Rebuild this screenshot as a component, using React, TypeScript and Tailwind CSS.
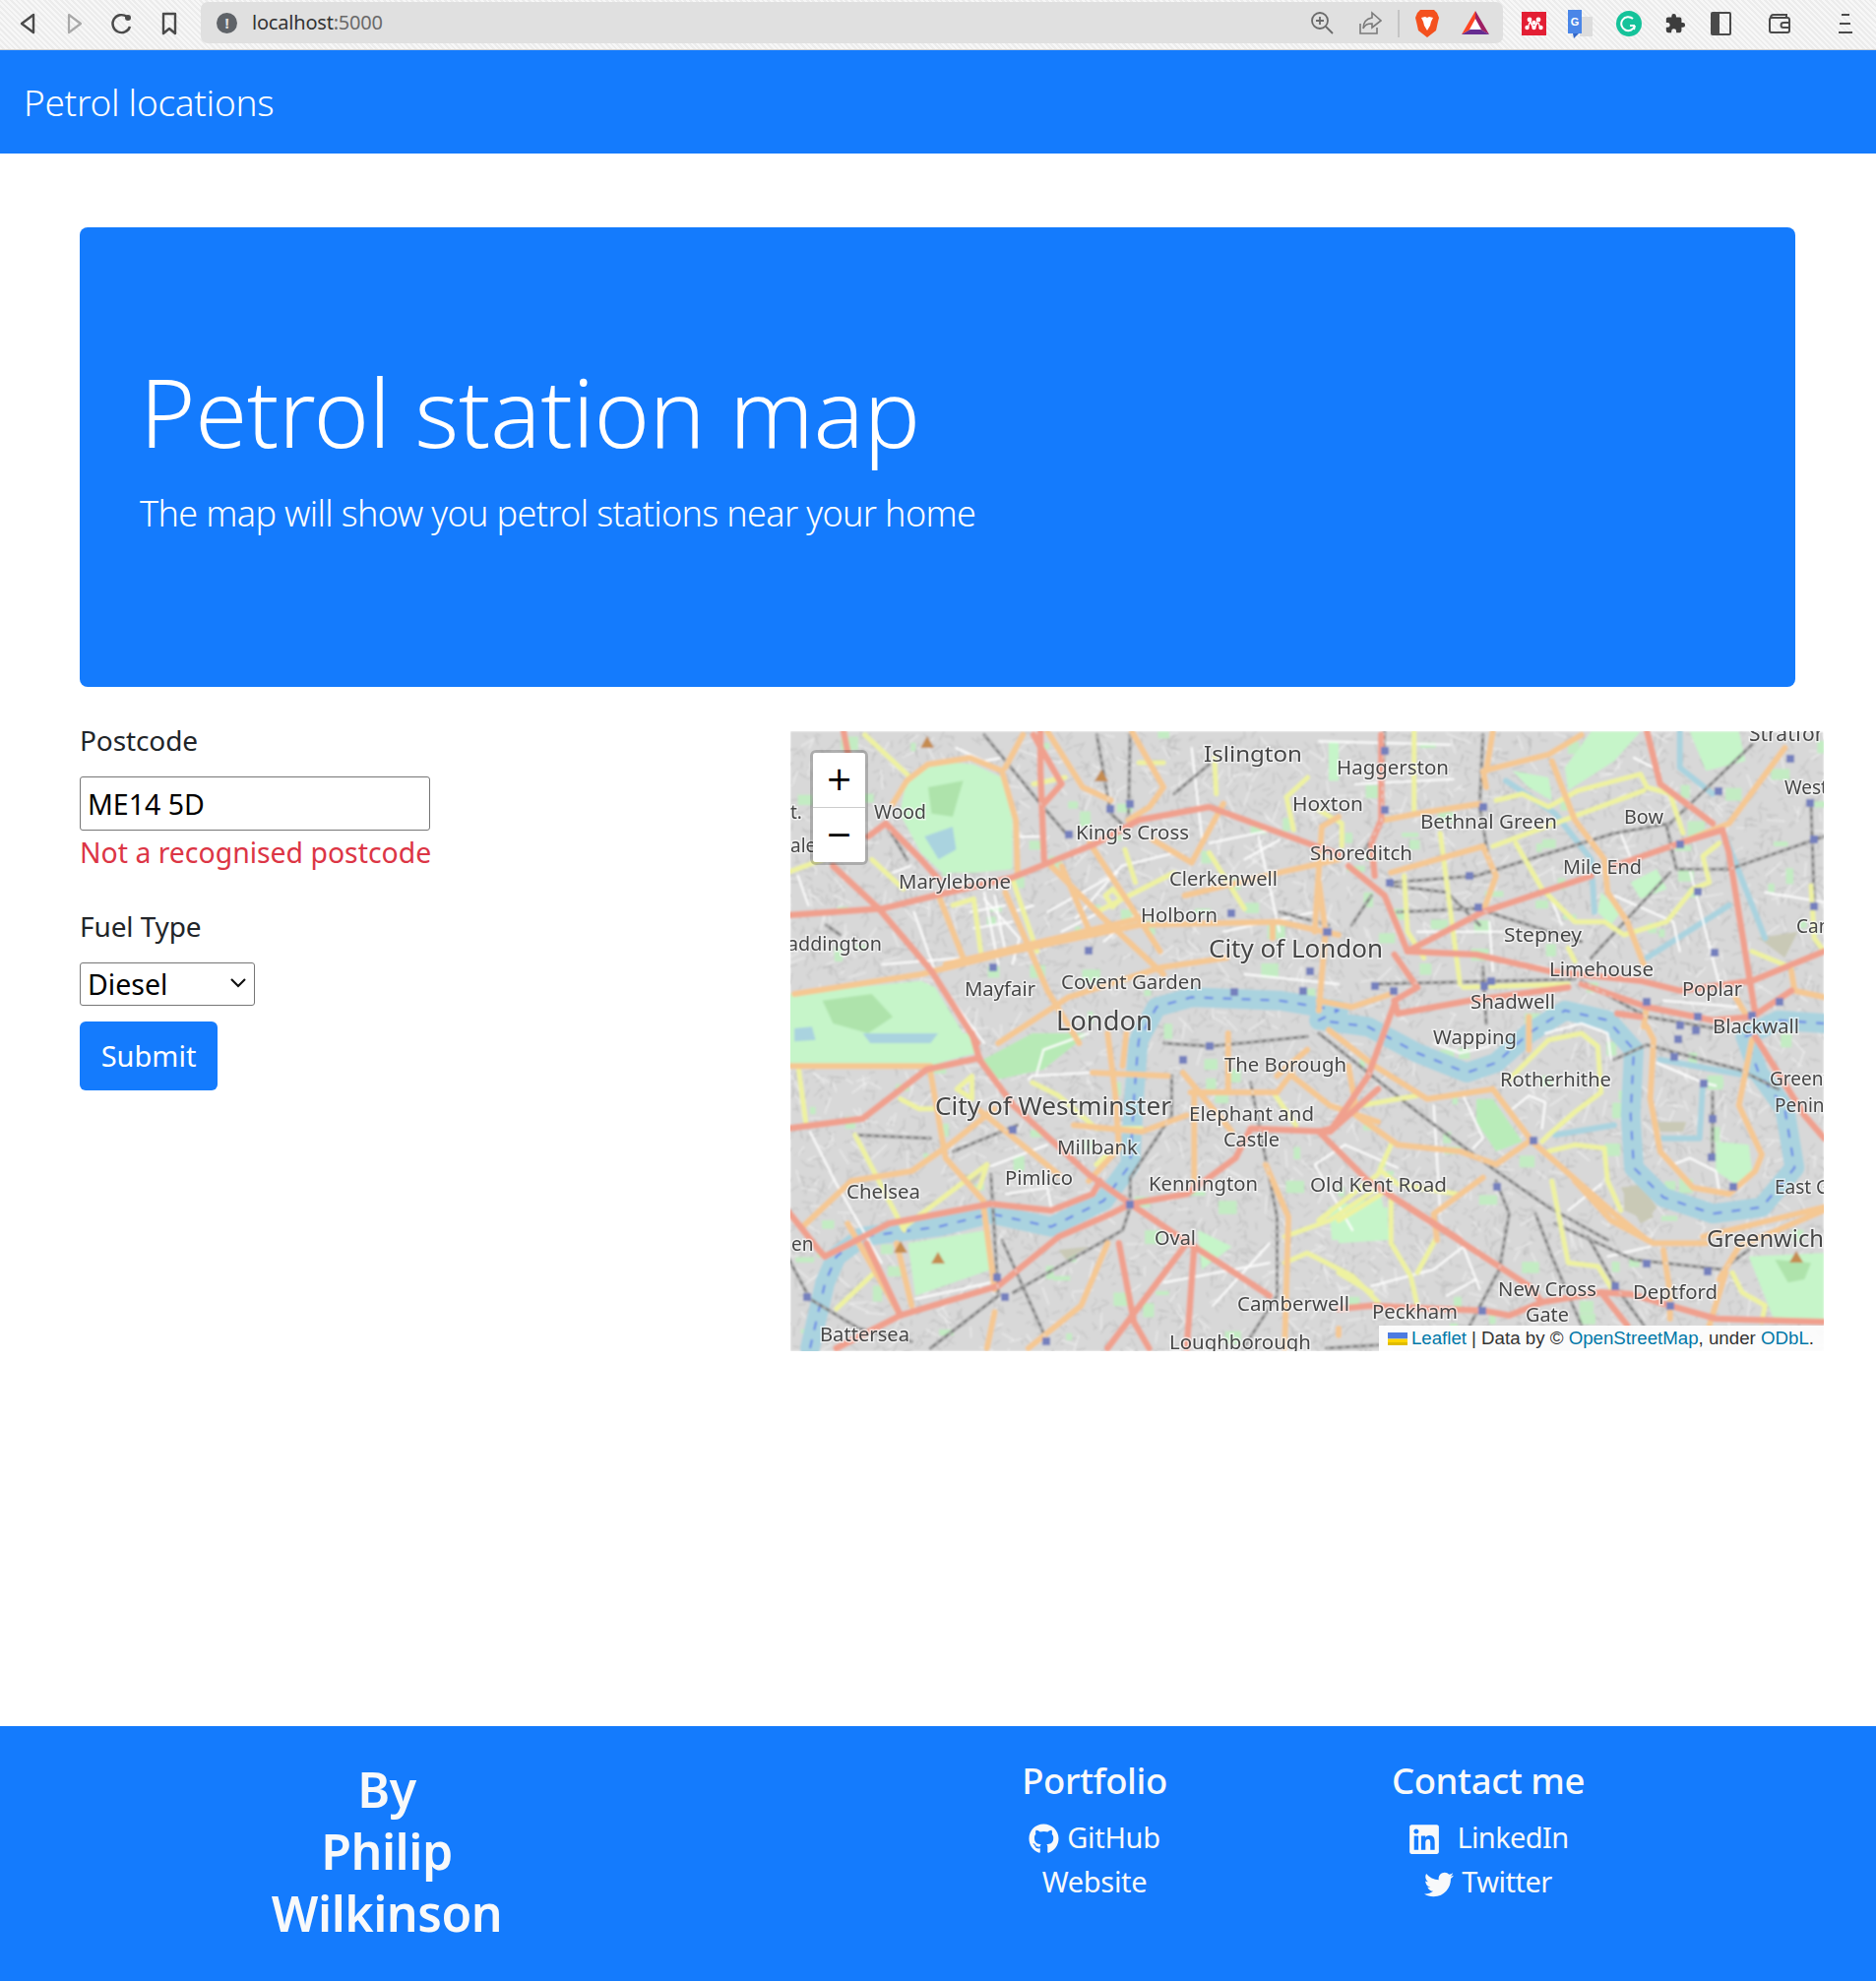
import { FaGithub, FaLinkedin, FaTwitter } from "react-icons/fa";

type Zone = 4 | 7 | 8 | 9 | 5;

// zoom crops of the map had their own scales, points are kept in those
function toMap(z: Zone, x: number, y: number): [number, number] {
  if (z === 4) return [x / 2.8 - 3, y / 3 - 3];
  if (z === 7) return [x / 2.613 - 3, y / 3 + 307];
  if (z === 8) return [x / 3 + 537, y / 3 - 3];
  if (z === 9) return [x / 3 + 537, y / 3 + 257];
  return [x / 3 + 557, y / 3 + 457];
}

function conv(z: Zone, nums: number[]) {
  const out: string[] = [];
  for (let i = 0; i < nums.length; i += 2) {
    const [x, y] = toMap(z, nums[i], nums[i + 1]);
    out.push(`${x.toFixed(1)},${y.toFixed(1)}`);
  }
  return out.join(" ");
}

const RIVER = [
  conv(7, [60, 960, 100, 760, 130, 680, 200, 620, 400, 590, 540, 550, 700, 590, 840, 510, 910, 400, 920, 200, 930, 50]),
  conv(4, [1000, 950, 1050, 850, 1150, 820, 1400, 830, 1568, 860]),
  conv(9, [0, 110, 150, 130, 300, 210, 450, 270, 540, 240, 640, 150, 750, 80, 880, 110, 960, 200, 950, 400, 960, 560, 1050, 650, 1200, 700, 1350, 680, 1450, 560, 1420, 380, 1340, 270, 1300, 160, 1400, 110, 1540, 120]),
].join(" ");

const ROADS: Record<string, [Zone, number[]][]> = {
  white: [
    [4, [300, 440, 350, 420]], [4, [360, 560, 420, 740]], [4, [560, 500, 600, 720]], [4, [650, 330, 720, 330]],
    [4, [820, 580, 950, 420, 1100, 380]], [4, [1200, 350, 1380, 310]], [4, [1150, 60, 1180, 340]],
    [4, [480, 60, 560, 100, 610, 90]], [4, [30, 450, 60, 540]], [4, [270, 720, 500, 700]], [4, [450, 800, 560, 960]],
    [4, [1300, 750, 1568, 780]], [4, [560, 520, 660, 640, 640, 720]], [4, [1240, 620, 1500, 560]],
    [4, [520, 560, 620, 540]], [4, [530, 610, 640, 590]], [4, [590, 510, 620, 680]], [4, [640, 560, 700, 540]],
    [4, [740, 560, 840, 500, 940, 440]], [4, [780, 620, 1000, 500]], [4, [900, 650, 1000, 560]],
    [4, [1300, 400, 1400, 340]], [4, [1260, 480, 1500, 420]], [4, [1340, 330, 1400, 620]],
    [7, [60, 300, 130, 460, 250, 700]], [7, [640, 140, 650, 130, 800, 120]], [7, [540, 405, 690, 340]],
    [7, [580, 490, 690, 470, 700, 530]], [7, [1000, 760, 1280, 700]], [7, [1130, 830, 1280, 640]],
    [7, [1480, 340, 1400, 400, 1500, 600]], [7, [340, 810, 540, 760]], [7, [660, 130, 680, 50, 800, 0]],
    [8, [0, 40, 400, 50]], [8, [110, 170, 410, 155]], [8, [900, 510, 1080, 590, 1100, 680]],
    [8, [700, 500, 740, 600]], [8, [520, 590, 530, 740]], [8, [920, 320, 960, 420]], [8, [1130, 430, 1220, 780]],
    [8, [300, 620, 560, 620]], [8, [960, 90, 1040, 130]], [8, [1360, 500, 1540, 530]], [8, [1050, 830, 1280, 850]],
    [9, [690, 150, 800, 120, 880, 150, 890, 230]], [9, [350, 180, 430, 210, 520, 190]], [9, [1030, 240, 1170, 300, 1210, 310]],
    [9, [590, 380, 640, 340, 690, 360, 680, 440]], [9, [1080, 550, 1130, 530, 1210, 570, 1220, 630]],
    [9, [350, 370, 370, 700]], [9, [80, 490, 240, 560]], [9, [440, 340, 500, 470, 470, 500]], [9, [760, 690, 860, 610]],
    [5, [100, 320, 290, 270, 380, 200, 430, 330]], [5, [330, 350, 420, 300]], [5, [820, 230, 950, 200]],
  ],
  yellow: [
    [4, [220, 20, 350, 150]], [4, [240, 400, 330, 490]], [4, [470, 540, 530, 520, 550, 680]], [4, [640, 460, 710, 680]],
    [4, [880, 560, 1100, 440]], [4, [960, 370, 990, 470]], [4, [1200, 380, 1300, 550]], [4, [1215, 90, 1220, 200]],
    [4, [700, 170, 790, 150]], [4, [0, 440, 100, 400]], [4, [1420, 210, 1480, 150]], [4, [1420, 210, 1440, 310]],
    [4, [1000, 105, 1070, 105]], [4, [905, 510, 925, 490, 950, 520, 925, 545, 905, 510]],
    [7, [30, 110, 50, 280]], [7, [180, 310, 310, 600]], [7, [300, 200, 350, 230, 390, 230]],
    [7, [650, 150, 720, 190, 820, 290, 940, 290]], [7, [310, 590, 530, 400]], [7, [1320, 620, 1440, 570, 1568, 470]],
    [7, [1320, 700, 1380, 670, 1500, 740, 1568, 820]], [7, [130, 840, 240, 720]], [7, [1290, 180, 1350, 280]],
    [7, [530, 400, 510, 470]], [7, [820, 400, 850, 370]], [7, [450, 170, 490, 130, 490, 200, 450, 170]],
    [8, [290, 10, 290, 250]], [8, [370, 320, 430, 780]], [8, [260, 450, 270, 620, 320, 700]], [8, [0, 250, 70, 290, 70, 360]],
    [8, [540, 220, 620, 200, 700, 240, 790, 190, 980, 140, 1000, 180, 1070, 200, 1110, 320]],
    [8, [530, 360, 720, 290, 990, 190]], [8, [600, 350, 680, 490, 780, 590, 870, 590, 930, 630, 1060, 590, 1140, 490]],
    [8, [1140, 490, 1190, 470, 1170, 390, 1220, 350]], [8, [1320, 680, 1440, 730]], [8, [1500, 480, 1510, 640, 1540, 680]],
    [8, [440, 790, 760, 780]], [8, [760, 670, 780, 710]],
    [9, [580, 290, 700, 170, 800, 150, 850, 190, 860, 330, 780, 390, 700, 460, 680, 480]],
    [9, [870, 500, 880, 600, 920, 690]], [9, [700, 510, 780, 490, 870, 500]], [9, [130, 370, 300, 340]],
    [9, [220, 490, 180, 580, 0, 720]], [9, [190, 570, 240, 610, 420, 640]], [9, [0, 720, 30, 700]],
    [5, [0, 280, 100, 340]], [5, [160, 40, 160, 190, 220, 290, 240, 380]], [5, [300, 170, 240, 280]],
    [5, [650, 0, 700, 250, 790, 260, 840, 340]], [5, [1200, 280, 1230, 340, 1300, 380, 1290, 430]], [5, [0, 120, 130, 40]],
  ],
  orange: [
    [4, [300, 230, 340, 160, 400, 110, 520, 90, 610, 130, 650, 280, 655, 450]],
    [4, [20, 810, 380, 750, 640, 680, 1000, 600, 1400, 590, 1568, 630]], [4, [430, 510, 500, 700]],
    [4, [450, 720, 1000, 580]], [4, [620, 500, 740, 800, 830, 960]], [4, [750, 420, 900, 580, 1070, 750]],
    [4, [860, 350, 1060, 680]], [4, [780, 420, 860, 620]], [4, [600, 960, 800, 820, 1060, 730, 1250, 700]],
    [4, [1040, 340, 1150, 410, 1240, 230]], [4, [1130, 510, 1400, 440, 1568, 400]], [4, [670, 20, 620, 120]],
    [4, [980, 10, 1070, 180, 1030, 240, 970, 280]], [4, [1380, 640, 1380, 590]], [4, [1500, 620, 1520, 300, 1568, 270]],
    [4, [740, 10, 840, 180, 920, 220]],
    [7, [40, 590, 170, 450, 330, 420, 430, 340, 550, 230]], [7, [380, 120, 420, 380, 520, 510]], [7, [510, 235, 720, 430]],
    [7, [10, 100, 380, 100]], [7, [810, 120, 1010, 130]], [7, [850, 0, 870, 180, 880, 350, 800, 450]],
    [7, [1050, 120, 1180, 300]], [7, [1170, 0, 1170, 180]], [7, [1080, 180, 1080, 470]],
    [7, [1070, 180, 1300, 180, 1340, 120]], [7, [760, 280, 940, 300, 1060, 250]], [7, [1270, 400, 1330, 560, 1320, 960]],
    [7, [850, 640, 780, 830, 640, 960]], [7, [530, 960, 550, 850]], [7, [520, 520, 550, 780]], [7, [290, 640, 330, 830]],
    [7, [160, 580, 300, 860]], [7, [1340, 130, 1440, 220, 1568, 270]], [7, [900, 0, 890, 100]], [7, [1300, 130, 1380, 50]],
    [8, [220, 440, 500, 360, 540, 450, 500, 560]], [8, [510, 180, 500, 130, 700, 80, 800, 20]], [8, [510, 130, 530, 10]],
    [8, [710, 100, 780, 280, 870, 400, 880, 500, 940, 590, 990, 720]], [8, [1100, 350, 1250, 290, 1420, 60]],
    [8, [200, 280, 300, 260, 490, 230]], [8, [0, 830, 100, 850, 220, 810]], [8, [1270, 820, 1300, 870]],
    [8, [1440, 740, 1450, 800, 1540, 820]], [8, [0, 470, 20, 620, 0, 860]],
    [9, [30, 140, 170, 250, 330, 350, 530, 320]], [9, [530, 320, 650, 480, 900, 700, 1000, 780]],
    [9, [240, 490, 430, 510, 540, 550, 640, 480]], [9, [100, 390, 240, 490]], [9, [500, 590, 350, 700, 360, 780]],
    [9, [1000, 130, 1020, 170, 1010, 350, 1040, 510, 1140, 620, 1250, 640, 1330, 570, 1350, 520, 1280, 370, 1320, 170]],
    [9, [1000, 60, 990, 130]], [9, [90, 250, 110, 360, 100, 390]], [9, [1170, 770, 1540, 680]], [9, [640, 100, 640, 200]],
    [5, [0, 450, 0, 470]], [5, [720, 0, 830, 120, 960, 190, 1120, 190]], [5, [990, 210, 1010, 340, 1010, 420]],
    [5, [1160, 300, 1220, 200, 1478, 90]], [5, [1180, 280, 1130, 440]],
  ],
  red: [
    [4, [0, 570, 270, 550, 420, 510, 640, 455, 880, 350, 1000, 280, 1200, 240, 1480, 350, 1568, 385]],
    [4, [720, 10, 720, 130, 730, 400]], [4, [700, 20, 780, 170, 730, 230]], [4, [130, 420, 260, 550, 410, 740, 540, 960]],
    [4, [230, 330, 280, 290, 380, 400, 430, 460]], [4, [160, 10, 180, 120]],
    [7, [490, 0, 510, 80, 600, 220, 800, 430, 910, 520, 1040, 620, 1280, 800]], [7, [0, 290, 200, 260, 370, 110, 510, 75]],
    [7, [100, 680, 270, 580, 540, 520, 700, 540, 810, 490, 830, 450]], [7, [210, 640, 300, 860]],
    [7, [300, 860, 560, 770, 720, 620, 860, 550, 910, 520]], [7, [0, 540, 90, 670, 100, 680]], [7, [300, 860, 130, 960]],
    [7, [910, 520, 1060, 490, 1190, 380, 1230, 290, 1440, 300, 1568, 170]], [7, [880, 640, 920, 880, 960, 960]],
    [7, [1060, 640, 850, 960]], [7, [1080, 650, 1060, 960]],
    [8, [90, 420, 200, 510, 270, 680, 500, 560, 830, 450]], [8, [900, 420, 1100, 350, 1230, 310, 1250, 380, 1330, 870]],
    [8, [1000, 10, 1040, 170, 1200, 290]], [8, [270, 680, 480, 690, 700, 740, 980, 770, 1100, 800, 1320, 770, 1540, 680]],
    [8, [230, 830, 240, 870, 460, 830, 760, 790]], [8, [190, 20, 190, 280, 160, 350, 170, 450]], [8, [230, 690, 300, 790, 230, 830]],
    [9, [230, 60, 150, 280, 40, 440]], [9, [0, 450, 150, 600, 430, 780]], [9, [800, 0, 1000, 70, 1200, 110, 1320, 100, 1440, 20]],
    [9, [1330, 160, 1480, 400, 1540, 470]], [9, [910, 90, 980, 100]], [9, [40, 440, 0, 450]],
    [5, [150, 40, 580, 320, 620, 370]], [5, [0, 390, 100, 380, 300, 390, 440, 395, 520, 410, 620, 370, 800, 340, 890, 345, 1010, 380, 1150, 420, 1480, 430]],
    [5, [800, 340, 880, 440]],
  ],
  rail: [
    [4, [880, 20, 920, 260, 950, 290]], [4, [975, 20, 970, 280]], [4, [560, 20, 720, 230, 800, 330]], [4, [290, 310, 340, 400]],
    [4, [1100, 200, 1200, 110]], [4, [1400, 560, 1540, 600]], [4, [110, 600, 150, 630]],
    [7, [0, 680, 60, 810, 190, 900, 330, 940]], [7, [540, 430, 560, 800, 380, 960]], [7, [570, 630, 690, 940]],
    [7, [910, 530, 890, 600, 600, 790]], [7, [1020, 130, 1020, 250, 910, 440, 910, 530]], [7, [1000, 30, 1120, 40, 1380, 10]],
    [7, [1230, 150, 1300, 560, 1300, 800, 1210, 960]], [7, [440, 360, 610, 280]], [7, [180, 310, 380, 320]], [7, [1430, 960, 1568, 950]],
    [8, [1540, 330, 1250, 430, 1090, 430, 1060, 300, 1320, 50]], [8, [1070, 440, 830, 700]],
    [8, [1070, 290, 900, 320, 640, 400, 480, 450, 220, 470]], [8, [500, 20, 490, 240, 520, 410]], [8, [200, 10, 190, 290, 140, 370]],
    [8, [220, 480, 390, 500, 490, 600]], [8, [100, 600, 160, 510]], [8, [240, 560, 480, 550, 800, 650]], [8, [170, 780, 780, 765]],
    [8, [500, 730, 510, 900]], [8, [1500, 230, 1510, 540]], [8, [800, 770, 1000, 880, 1240, 920]],
    [9, [0, 150, 300, 390, 540, 570, 700, 680, 880, 780]], [9, [900, 230, 1000, 185, 1280, 260, 1400, 320]], [9, [1200, 330, 1200, 530]],
    [5, [480, 0, 520, 100, 490, 270, 400, 440]], [5, [600, 100, 650, 230, 740, 440]], [5, [660, 130, 900, 240, 1170, 270, 1250, 210]],
    [5, [760, 170, 850, 330, 930, 440]],
  ],
  canal: [
    [8, [570, 160, 720, 260, 830, 400, 840, 560]], [8, [1000, 700, 1250, 540]], [8, [1230, 310, 1360, 640]], [8, [1100, 10, 1100, 120, 1200, 200]],
    [9, [1170, 310, 1160, 470, 1050, 470]], [9, [1040, 230, 1310, 280]], [9, [720, 460, 900, 430]],
  ],
};

const ROAD_STYLE: Record<string, [string, number]> = {
  white: ["#ffffff", 2],
  yellow: ["#eef2a0", 5],
  orange: ["#f5c893", 6],
  red: ["#f0a08e", 6.5],
  rail: ["#7c7c7c", 3],
  canal: ["#aad3df", 6],
};

const PARKS: [Zone, string, number[]][] = [
  [4, "#c6f5c9", [340, 150, 420, 100, 530, 110, 610, 150, 640, 280, 640, 430, 530, 440, 440, 440, 380, 380, 320, 260]],
  [4, "#c6f5c9", [0, 810, 380, 770, 420, 790, 520, 965, 0, 965]],
  [7, "#c6f5c9", [0, 0, 490, 0, 500, 60, 370, 100, 0, 100]],
  [4, "#aee3ab", [100, 830, 240, 810, 300, 880, 230, 930, 130, 900]],
  [4, "#aee3ab", [400, 180, 500, 160, 470, 270, 410, 260]],
  [4, "#aad3df", [390, 330, 470, 300, 480, 370, 430, 400]],
  [4, "#aad3df", [20, 915, 70, 910, 80, 950, 20, 955]],
  [7, "#aad3df", [200, 0, 400, 0, 380, 30, 220, 30]],
  [7, "#b7eab6", [520, 80, 650, 0, 800, 0, 680, 110, 560, 140]],
  [7, "#c6f5c9", [320, 640, 530, 600, 540, 720, 340, 800]],
  [8, "#c6f5c9", [750, 120, 830, 10, 980, 10, 900, 100, 760, 190]],
  [8, "#c6f5c9", [590, 130, 700, 150, 710, 220, 640, 180]],
  [8, "#c6f5c9", [950, 470, 1030, 430, 1060, 490, 980, 520]],
  [8, "#c6f5c9", [860, 500, 920, 560, 890, 600, 850, 560]],
  [8, "#c6f5c9", [1130, 10, 1280, 10, 1300, 100, 1180, 130]],
  [9, "#b9ecb9", [480, 350, 530, 350, 620, 480, 540, 510, 480, 420]],
  [9, "#c6f5c9", [1210, 480, 1310, 490, 1320, 570, 1270, 610, 1210, 570]],
  [5, "#c6f5c9", [1250, 230, 1480, 220, 1480, 430, 1330, 430]],
  [5, "#aee3ab", [1330, 240, 1440, 250, 1420, 300, 1370, 310]],
  [5, "#c6f5c9", [0, 100, 150, 80, 150, 180, 0, 190]],
  [9, "#c6f5c9", [30, 680, 190, 650, 220, 780, 40, 780]],
  [7, "#c6f5c9", [1090, 600, 1180, 650, 1100, 720]],
  [4, "#c6f5c9", [1540, 40, 1568, 40, 1568, 160, 1540, 160]],
];

const TAN: [Zone, number[]][] = [
  [9, [930, 620, 980, 610, 1030, 680, 1000, 720, 930, 690]],
  [9, [1030, 420, 1120, 420, 1110, 450, 1040, 450]],
  [5, [860, 20, 910, 15, 960, 110, 920, 130]],
  [7, [720, 660, 800, 650, 740, 690]],
  [7, [460, 430, 520, 430, 480, 470]],
  [8, [1340, 640, 1460, 620, 1420, 700]],
];

const STATIONS: [number, number][] = [
  [604, 20], [604, 80], [704, 77], [609, 154], [690, 147], [699, 179], [545, 204], [594, 259], [613, 264], [705, 259],
  [712, 254], [870, 275], [922, 290], [904, 299], [920, 304], [977, 289], [1005, 275], [904, 115], [922, 163], [939, 225],
  [943, 61], [1016, 28], [1036, 73], [1040, 110], [1040, 178], [902, 313], [898, 331], [928, 358], [937, 394], [936, 433],
  [958, 463], [755, 416], [718, 463], [870, 541], [932, 549], [838, 564], [894, 584], [703, 589], [325, 79], [345, 74],
  [283, 105], [448, 185], [546, 204], [303, 223], [206, 240], [528, 244], [451, 265], [521, 264], [226, 405], [345, 481],
  [399, 334], [426, 320], [210, 555], [218, 575], [260, 620], [17, 575],
];

const PEAKS: [number, number][] = [[139, 11], [316, 45], [112, 524], [150, 535], [1022, 534]];

const LABELS: [string, number, number, number, number][] = [
  ["Islington", 420, 31, 22, 100],
  ["Haggerston", 555, 44, 19, 114],
  ["Hoxton", 510, 81, 19, 72],
  ["Bethnal Green", 640, 99, 19.5, 139],
  ["Bow", 847, 94, 19, 40],
  ["Mile End", 785, 145, 19, 80],
  ["Shoreditch", 528, 131, 19, 104],
  ["King's Cross", 290, 110, 19, 115],
  ["Wood", 85, 89, 19, 53],
  ["t.", 0, 89, 19, 0],
  ["ale", 0, 123, 19, 0],
  ["Marylebone", 110, 160, 19, 114],
  ["Clerkenwell", 385, 157, 19, 110],
  ["Holborn", 356, 194, 19, 78],
  ["City of London", 425, 230, 25, 177],
  ["addington", -3, 223, 19, 96],
  ["Mayfair", 177, 269, 19, 72],
  ["Covent Garden", 275, 262, 19, 143],
  ["London", 270, 304, 28, 98],
  ["Stepney", 725, 214, 19, 79],
  ["Limehouse", 771, 249, 19, 106],
  ["Poplar", 906, 269, 19, 61],
  ["Shadwell", 691, 282, 19, 86],
  ["Wapping", 653, 318, 19, 85],
  ["Blackwall", 937, 307, 20, 88],
  ["Rotherhithe", 721, 361, 19, 113],
  ["The Borough", 441, 346, 19, 124],
  ["City of Westminster", 147, 390, 26, 240],
  ["Elephant and", 405, 396, 19, 127],
  ["Castle", 440, 422, 19, 57],
  ["Millbank", 271, 430, 19, 82],
  ["Pimlico", 218, 461, 19, 69],
  ["Kennington", 364, 467, 19, 111],
  ["Chelsea", 57, 475, 19, 75],
  ["Old Kent Road", 528, 468, 19, 139],
  ["Oval", 370, 522, 19, 42],
  ["Camberwell", 454, 589, 19, 114],
  ["Peckham", 591, 597, 19, 87],
  ["New Cross", 719, 574, 19, 100],
  ["Gate", 747, 600, 19, 44],
  ["Deptford", 856, 577, 19, 86],
  ["Loughborough", 385, 628, 19, 144],
  ["Battersea", 30, 620, 19, 91],
  ["en", 1, 528, 19, 0],
  ["Greenwich", 931, 524, 24, 119],
  ["East Greenwich", 1000, 470, 19, 0],
  ["Greenwich", 995, 360, 19, 0],
  ["Peninsula", 1000, 387, 19, 0],
  ["Stratford", 974, 10, 21, 0],
  ["West Ham", 1010, 64, 19, 0],
  ["Canning Town", 1022, 205, 19, 0],
];

// street grain on the land, same every run
function grain() {
  let s = 4242;
  const rnd = () => {
    s = (s * 1664525 + 1013904223) % 4294967296;
    return s / 4294967296;
  };
  let gray = "";
  let light = "";
  const greens: [number, number, number, number][] = [];
  for (let i = 0; i < 6000; i++) {
    const x = rnd() * 1050;
    const y = rnd() * 630;
    const a = rnd() * Math.PI;
    const l = 4 + rnd() * 8;
    gray += `M${x.toFixed(0)} ${y.toFixed(0)}l${(Math.cos(a) * l).toFixed(1)} ${(Math.sin(a) * l).toFixed(1)}`;
  }
  for (let i = 0; i < 1300; i++) {
    const x = rnd() * 1050;
    const y = rnd() * 630;
    const a = rnd() * Math.PI;
    const l = 6 + rnd() * 16;
    light += `M${x.toFixed(0)} ${y.toFixed(0)}l${(Math.cos(a) * l).toFixed(1)} ${(Math.sin(a) * l).toFixed(1)}`;
  }
  for (let i = 0; i < 170; i++) {
    greens.push([rnd() * 1050, rnd() * 630, 5 + rnd() * 14, 4 + rnd() * 12]);
  }
  return { gray, light, greens };
}
const GRAIN = grain();

function MapDrawing() {
  return (
    <svg viewBox="0 0 1050 630" width="1050" height="630" className="block">
      <defs>
        <filter id="tile" x="0" y="0" width="100%" height="100%">
          <feGaussianBlur stdDeviation="0.8" />
        </filter>
        <filter id="tileText" x="-5%" y="-20%" width="110%" height="140%">
          <feGaussianBlur stdDeviation="0.4" />
        </filter>
      </defs>
      <g filter="url(#tile)">
        <rect width="1050" height="630" fill="#d8d8d8" />
        <path d={GRAIN.gray} stroke="#bdbdbd" strokeWidth="1" fill="none" />
        <path d={GRAIN.light} stroke="#eeeeee" strokeWidth="1.2" fill="none" />
        {GRAIN.greens.map((g, i) => (
          <rect key={i} x={g[0]} y={g[1]} width={g[2]} height={g[3]} fill="#c3ecc3" />
        ))}
        {PARKS.map(([z, c, pts], i) => (
          <polygon key={i} points={conv(z, pts)} fill={c} />
        ))}
        {TAN.map(([z, pts], i) => (
          <polygon key={i} points={conv(z, pts)} fill="#c9c9b6" />
        ))}
        <polyline points={RIVER} fill="none" stroke="#aad3df" strokeWidth="20" strokeLinejoin="round" strokeLinecap="round" />
        <polyline points={RIVER} fill="none" stroke="#6280e6" strokeWidth="2" strokeDasharray="9 10" strokeLinejoin="round" />
        {["canal", "white", "rail", "yellow", "orange", "red"].map((key) =>
          ROADS[key].map(([z, pts], i) => (
            <polyline
              key={key + i}
              points={conv(z, pts)}
              fill="none"
              stroke={ROAD_STYLE[key][0]}
              strokeWidth={ROAD_STYLE[key][1]}
              strokeLinejoin="round"
              strokeLinecap="round"
            />
          )),
        )}
        {ROADS.rail.map(([z, pts], i) => (
          <polyline key={i} points={conv(z, pts)} fill="none" stroke="#e4e4e4" strokeWidth="1" strokeDasharray="4 4" />
        ))}
        {STATIONS.map(([x, y], i) => (
          <rect key={i} x={x - 4} y={y - 4} width="8" height="8" fill="#7580bd" />
        ))}
        {PEAKS.map(([x, y], i) => (
          <polygon key={i} points={`${x - 7},${y + 6} ${x + 7},${y + 6} ${x},${y - 6}`} fill="#c58b4f" />
        ))}
      </g>
      <g filter="url(#tileText)">
        {LABELS.map(([t, x, y, size, w], i) => (
          <text
            key={i}
            x={x}
            y={y}
            fontSize={size}
            fontFamily="'Noto Sans', sans-serif"
            fill="#474747"
            stroke="#ffffff"
            strokeOpacity="0.6"
            strokeWidth="3"
            paintOrder="stroke"
            {...(w ? { textLength: w, lengthAdjust: "spacingAndGlyphs" as const } : {})}
          >
            {t}
          </text>
        ))}
      </g>
    </svg>
  );
}

function BrowserBar() {
  return (
    <div className="flex h-[51px] items-start border-b border-[#cfcfcf] bg-[#f1f1f1] bg-[repeating-linear-gradient(45deg,#f7f7f7_0,#f7f7f7_2px,#ececec_2px,#ececec_4px)] pl-[4px] pt-[2px]">
      <div className="flex h-[44px] w-[48px] items-center justify-center">
        <svg width="18" height="24" viewBox="0 0 18 24" fill="none" stroke="#4a4a4a" strokeWidth="2.4" strokeLinejoin="round">
          <path d="M15 3 3 12l12 9z" />
        </svg>
      </div>
      <div className="flex h-[44px] w-[48px] items-center justify-center">
        <svg width="18" height="24" viewBox="0 0 18 24" fill="none" stroke="#a8a8a8" strokeWidth="2.2" strokeLinejoin="round">
          <path d="M3 3l12 9-12 9z" />
        </svg>
      </div>
      <div className="flex h-[44px] w-[48px] items-center justify-center">
        <svg width="24" height="24" viewBox="0 0 24 24" fill="none" stroke="#4a4a4a" strokeWidth="2.4">
          <path d="M20 15a9 9 0 1 1-3-10" />
          <circle cx="18" cy="6" r="3" fill="#4a4a4a" stroke="none" />
        </svg>
      </div>
      <div className="flex h-[44px] w-[48px] items-center justify-center">
        <svg width="18" height="24" viewBox="0 0 18 24" fill="none" stroke="#4a4a4a" strokeWidth="2.4" strokeLinejoin="round">
          <path d="M3 2h12v20l-6-5-6 5z" />
        </svg>
      </div>
      <div className="ml-[8px] flex h-[42px] w-[1323px] items-center rounded-[7px] bg-[#e0e0e0] pl-[16px]">
        <div className="flex h-[21px] w-[21px] items-center justify-center rounded-full bg-[#5f6368] text-[15px] leading-none font-bold text-[#e0e0e0]">
          !
        </div>
        <div className="ml-[15px] text-[20px] tracking-[-0.2px] text-[#333] font-['Noto_Sans',sans-serif]">
          localhost<span className="text-[#6a6a6a]">:5000</span>
        </div>
        <div className="ml-auto flex items-center pr-[111px]">
          <div className="flex w-[49px] justify-center">
            <svg width="24" height="24" viewBox="0 0 24 24" fill="none" stroke="#6a6a6a" strokeWidth="1.8">
              <circle cx="10" cy="10" r="8" />
              <path d="M16 16l7 7M10 6v8M6 10h8" />
            </svg>
          </div>
          <div className="flex w-[49px] justify-center">
            <svg width="24" height="24" viewBox="0 0 24 24" fill="none" stroke="#7a7a7a" strokeWidth="1.6">
              <path d="M2 13v10h17v-6" />
              <path d="M14 2l9 8-9 7v-4c-5 0-7 1-9 5 0-6 3-10 9-11z" />
            </svg>
          </div>
        </div>
      </div>
    </div>
  );
}

function ExtensionIcons() {
  // sits over the browser bar, on the right hand end
  return (
    <div className="absolute top-[2px] left-[1420px] flex h-[44px] items-center">
      <div className="h-[28px] w-[2px] bg-[#c4c4c4]" />
      <div className="ml-[15px] flex h-[30px] w-[26px] items-center justify-center">
        <svg width="26" height="30" viewBox="0 0 26 30">
          <path d="M6 1h14l3 3 2 5-1 4-2 9-9 7-9-7-2-9-1-4 2-5z" fill="#f4511e" />
          <path d="M7 9l4-1 2 1 2-1 4 1-2 4-1 4-3 5-3-5-1-4z" fill="#ffffff" />
        </svg>
      </div>
      <div className="ml-[22px] flex h-[30px] w-[28px] items-center justify-center">
        <svg width="28" height="26" viewBox="0 0 28 26">
          <path d="M14 0 0 24l14-8z" fill="#ff4724" />
          <path d="M14 0l14 24-14-8z" fill="#9e1f63" />
          <path d="M0 24h28l-14-8z" fill="#662d91" />
          <path d="M14 8l6 11H8z" fill="#ffffff" />
        </svg>
      </div>
      <div className="ml-[33px] flex h-[24px] w-[25px] items-center justify-center bg-[#e31f34]">
        <svg width="19" height="14" viewBox="0 0 19 14" fill="#ffffff">
          <circle cx="5" cy="3" r="2.4" />
          <circle cx="14" cy="3" r="2.4" />
          <circle cx="9.5" cy="6" r="2.2" />
          <circle cx="2.5" cy="11" r="2.2" />
          <circle cx="9.5" cy="11" r="2.2" />
          <circle cx="16.5" cy="11" r="2.2" />
          <path d="M4 4h2l4 7H8zM13 4h2l-4 7H9zM3 10l2-6 1 1-2 6zM16 10l-2-6-1 1 2 6z" />
        </svg>
      </div>
      <div className="relative ml-[22px] h-[30px] w-[25px]">
        <div className="absolute top-[8px] left-[12px] h-[20px] w-[13px] bg-[#dddddd]" />
        <div className="absolute top-[1px] left-0 flex h-[24px] w-[14px] items-center justify-center bg-[#4a86e8] text-[11px] font-bold text-white font-['Liberation_Sans',sans-serif]">
          G
        </div>
        <div className="absolute top-[25px] left-[5px] h-0 w-0 border-t-[5px] border-r-[5px] border-l-[1px] border-t-[#3367c8] border-r-transparent border-l-transparent" />
      </div>
      <div className="ml-[24px] flex h-[26px] w-[26px] items-center justify-center rounded-full bg-[#15c39a]">
        <svg width="18" height="18" viewBox="0 0 18 18" fill="none" stroke="#ffffff" strokeWidth="2">
          <path d="M13 4a7 7 0 1 0 2 7l-1 4M15 11H10" />
        </svg>
      </div>
      <div className="ml-[23px] flex w-[22px] justify-center">
        <svg width="24" height="24" viewBox="0 0 24 24" fill="#3d3d3d">
          <path d="M20.5 11H19V7a2 2 0 0 0-2-2h-4V3.5a2.5 2.5 0 0 0-5 0V5H4a2 2 0 0 0-2 2v3.8h1.5a2.7 2.7 0 0 1 0 5.4H2V20a2 2 0 0 0 2 2h3.8v-1.5a2.7 2.7 0 0 1 5.4 0V22H17a2 2 0 0 0 2-2v-4h1.5a2.5 2.5 0 0 0 0-5z" />
        </svg>
      </div>
      <div className="ml-[25px] flex h-[24px] w-[21px] overflow-hidden rounded-[2px] border-[2px] border-[#4a4a4a]">
        <div className="w-[7px] bg-[#4a4a4a]" />
      </div>
      <div className="ml-[37px] flex w-[24px] justify-center">
        <svg width="24" height="24" viewBox="0 0 24 24" fill="none" stroke="#4a4a4a" strokeWidth="2">
          <path d="M3 6c0-2 1-3 3-3h13v3" />
          <rect x="2" y="6" width="20" height="15" rx="2" />
          <path d="M22 11h-6a2 2 0 0 0 0 5h6" />
        </svg>
      </div>
      <div className="ml-[48px] flex w-[14px] flex-col gap-[7px]">
        <div className="ml-[3px] h-[2px] w-[8px] bg-[#4a4a4a]" />
        <div className="ml-[1px] h-[2px] w-[11px] bg-[#4a4a4a]" />
        <div className="h-[2px] w-[14px] bg-[#4a4a4a]" />
      </div>
    </div>
  );
}

export default function App() {
  return (
    <div className="relative w-[1906px] bg-white font-['Noto_Sans',sans-serif] text-[#212529]">
      <BrowserBar />
      <ExtensionIcons />

      <nav className="flex h-[105px] items-center bg-[#147bfd] pl-[24px]">
        <span className="text-[37px] leading-none font-light tracking-[-0.3px] text-white">Petrol locations</span>
      </nav>

      <div className="px-[81px] pt-[75px]">
        <div className="flex h-[467px] w-[1743px] flex-col justify-center rounded-[8px] bg-[#147bfd] pb-[20px] pl-[61px] text-white">
          <h1 className="text-[96px] leading-[1.2] font-light tracking-[-0.4px]">Petrol station map</h1>
          <p className="mt-[20px] text-[36px] leading-[1.5] font-light tracking-[-0.65px]">
            The map will show you petrol stations near your home
          </p>
        </div>
      </div>

      <div className="flex h-[1056px] pt-[45px] pl-[81px]">
        <div className="w-[722px]">
          <label className="mt-[-9px] block text-[28px] leading-[36px] tracking-[-0.1px]">Postcode</label>
          <input
            readOnly
            value="ME14 5D"
            className="mt-[19px] block h-[55px] w-[356px] rounded-[3px] border-[1.5px] border-[#767676] pl-[7px] text-[28.5px] text-black"
          />
          <div className="mt-[4px] text-[28.4px] leading-[36px] text-[#dc3545]">Not a recognised postcode</div>
          <label className="mt-[39px] block text-[28px] leading-[36px] tracking-[-0.1px]">Fuel Type</label>
          <div className="relative mt-[19px] flex h-[44px] w-[178px] items-center rounded-[3px] border-[1.5px] border-[#767676] pl-[7px] text-[28.5px] text-black">
            Diesel
            <svg className="absolute top-[14px] left-[152px]" width="16" height="12" viewBox="0 0 16 12" fill="none" stroke="#111" strokeWidth="2.2">
              <path d="M1 2l7 7 7-7" />
            </svg>
          </div>
          <button className="mt-[16px] block h-[70px] w-[140px] rounded-[6px] bg-[#147bfd] text-[29px] text-white">
            Submit
          </button>
        </div>

        <div className="relative h-[630px] w-[1050px] overflow-hidden">
          <MapDrawing />
          <div className="absolute top-[19px] left-[20px] w-[59px] overflow-hidden rounded-[6px] border-[3px] border-black/20 bg-clip-padding">
            <div className="flex h-[56px] items-center justify-center border-b border-[#cccccc] bg-white pb-[3px] text-[33px] leading-none text-black font-['DejaVu_Sans',sans-serif]">
              +
            </div>
            <div className="flex h-[55px] items-center justify-center bg-white pb-[3px] text-[33px] leading-none text-black font-['DejaVu_Sans',sans-serif]">
              −
            </div>
          </div>
          <div className="absolute right-0 bottom-0 flex h-[26px] items-center bg-white/90 pr-[10px] pl-[9px] text-[18.7px] text-[#333] font-['Liberation_Sans',sans-serif]">
            <svg className="mr-[4px]" width="20" height="13" viewBox="0 0 20 13">
              <rect width="20" height="6.5" fill="#4c7be1" />
              <rect y="6.5" width="20" height="3.5" fill="#ffd500" />
              <rect y="10" width="20" height="3" fill="#e0bc00" />
            </svg>
            <span className="text-[#0078a8]">Leaflet</span>
            <span className="ml-[5px]">| Data by ©&nbsp;</span>
            <span className="text-[#0078a8]">OpenStreetMap</span>
            <span>, under&nbsp;</span>
            <span className="text-[#0078a8]">ODbL</span>
            <span>.</span>
          </div>
        </div>
      </div>

      <footer className="flex h-[259px] bg-[#147bfd] text-[#f8f9fa]">
        <div className="flex w-[786px] flex-col items-center pt-[33px] text-[50px] leading-[63px] font-semibold tracking-[-0.5px]">
          <div>By</div>
          <div>Philip</div>
          <div>Wilkinson</div>
        </div>
        <div className="ml-[126px] flex w-[400px] flex-col items-center pt-[30px]">
          <div className="text-[36.5px] leading-[50px] font-medium tracking-[-0.4px]">Portfolio</div>
          <div className="mt-[10px] flex h-[45px] items-center text-[29px] tracking-[-0.3px]">
            <FaGithub size={31} className="mt-[4px] mr-[8px]" />
            GitHub
          </div>
          <div className="flex h-[45px] items-center text-[29px] tracking-[-0.3px]">Website</div>
        </div>
        <div className="flex w-[400px] flex-col items-center pt-[30px]">
          <div className="text-[36.5px] leading-[50px] font-medium tracking-[-0.4px]">Contact me</div>
          <div className="mt-[10px] flex h-[45px] items-center text-[29px] tracking-[-0.6px]">
            <FaLinkedin size={34} className="mt-[4px] mr-[16px]" />
            LinkedIn
          </div>
          <div className="flex h-[45px] items-center text-[29px] tracking-[-0.5px]">
            <FaTwitter size={30} className="mt-[6px] mr-[8px]" />
            Twitter
          </div>
        </div>
      </footer>
    </div>
  );
}
